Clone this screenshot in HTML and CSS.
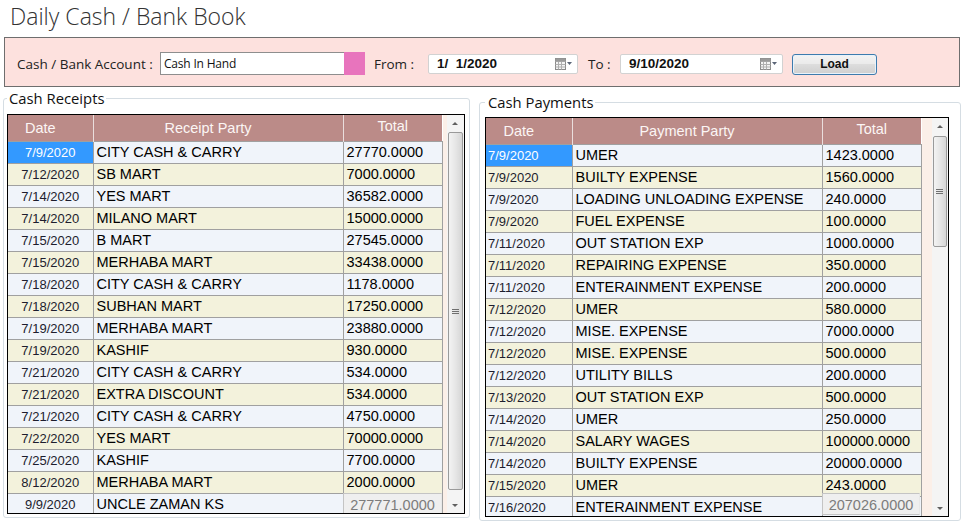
FILE: index.html
```html
<!DOCTYPE html>
<html>
<head>
<meta charset="utf-8">
<link rel="stylesheet" href="styles.css">
</head>
<body>
<div class="title">Daily Cash / Bank Book</div>
<div class="filter">
  <span class="lbl lbl-acc">Cash / Bank Account :</span>
  <span class="acc-input">Cash In Hand</span><span class="acc-pick"></span>
  <span class="lbl lbl-from">From :</span>
  <span class="dp dp-from"><span class="dp-text">1/&nbsp; 1/2020</span>
    <svg class="cal" width="18" height="12" viewBox="0 0 18 12"><rect x="0.5" y="0.5" width="10" height="11" fill="#f4f4f4" stroke="#8a8a8a"/><path d="M0.5 3.5h10M3.5 3.5v8M6.5 3.5v8M0.5 6.5h10M0.5 9h10" stroke="#b0b0b0" fill="none"/><rect x="0.5" y="0.5" width="10" height="3" fill="#9a9a9a"/><path d="M12 4h5l-2.5 3z" fill="#5b6577"/></svg>
  </span>
  <span class="lbl lbl-to">To :</span>
  <span class="dp dp-to"><span class="dp-text">9/10/2020</span>
    <svg class="cal" width="18" height="12" viewBox="0 0 18 12"><rect x="0.5" y="0.5" width="10" height="11" fill="#f4f4f4" stroke="#8a8a8a"/><path d="M0.5 3.5h10M3.5 3.5v8M6.5 3.5v8M0.5 6.5h10M0.5 9h10" stroke="#b0b0b0" fill="none"/><rect x="0.5" y="0.5" width="10" height="3" fill="#9a9a9a"/><path d="M12 4h5l-2.5 3z" fill="#5b6577"/></svg>
  </span>
  <span class="btn">Load</span>
</div>
<div class="groups">
  <fieldset class="group group-left">
    <legend>Cash Receipts</legend>
    <div class="grid grid-left">
      <table class="tbl">
        <colgroup><col class="c-date"><col class="c-party"><col class="c-total"></colgroup>
        <tr class="hdr"><th>Date</th><th>Receipt Party</th><th class="th-total">Total</th></tr>
        <tr class="o"><td class="d sel">7/9/2020</td><td>CITY CASH &amp; CARRY</td><td>27770.0000</td></tr>
        <tr class="e"><td class="d">7/12/2020</td><td>SB MART</td><td>7000.0000</td></tr>
        <tr class="o"><td class="d">7/14/2020</td><td>YES MART</td><td>36582.0000</td></tr>
        <tr class="e"><td class="d">7/14/2020</td><td>MILANO MART</td><td>15000.0000</td></tr>
        <tr class="o"><td class="d">7/15/2020</td><td>B MART</td><td>27545.0000</td></tr>
        <tr class="e"><td class="d">7/15/2020</td><td>MERHABA MART</td><td>33438.0000</td></tr>
        <tr class="o"><td class="d">7/18/2020</td><td>CITY CASH &amp; CARRY</td><td>1178.0000</td></tr>
        <tr class="e"><td class="d">7/18/2020</td><td>SUBHAN MART</td><td>17250.0000</td></tr>
        <tr class="o"><td class="d">7/19/2020</td><td>MERHABA MART</td><td>23880.0000</td></tr>
        <tr class="e"><td class="d">7/19/2020</td><td>KASHIF</td><td>930.0000</td></tr>
        <tr class="o"><td class="d">7/21/2020</td><td>CITY CASH &amp; CARRY</td><td>534.0000</td></tr>
        <tr class="e"><td class="d">7/21/2020</td><td>EXTRA DISCOUNT</td><td>534.0000</td></tr>
        <tr class="o"><td class="d">7/21/2020</td><td>CITY CASH &amp; CARRY</td><td>4750.0000</td></tr>
        <tr class="e"><td class="d">7/22/2020</td><td>YES MART</td><td>70000.0000</td></tr>
        <tr class="o"><td class="d">7/25/2020</td><td>KASHIF</td><td>7700.0000</td></tr>
        <tr class="e"><td class="d">8/12/2020</td><td>MERHABA MART</td><td>2000.0000</td></tr>
        <tr class="o"><td class="d">9/9/2020</td><td>UNCLE ZAMAN KS</td><td></td></tr>
      </table>
      <div class="vzone">
        <div class="strip"></div>
        <div class="vscroll">
          <div class="arrow up"></div>
          <div class="track"><div class="thumb thumb-left"><span class="grip"></span></div></div>
          <div class="arrow down"></div>
        </div>
      </div>
      <div class="sum sum-left">277771.0000</div>
    </div>
  </fieldset>
  <fieldset class="group group-right">
    <legend>Cash Payments</legend>
    <div class="grid grid-right">
      <table class="tbl tbl-right">
        <colgroup><col class="c-date2"><col class="c-party"><col class="c-total"></colgroup>
        <tr class="hdr"><th>Date</th><th>Payment Party</th><th class="th-total">Total</th></tr>
        <tr class="o"><td class="d sel">7/9/2020</td><td>UMER</td><td>1423.0000</td></tr>
        <tr class="e"><td class="d">7/9/2020</td><td>BUILTY EXPENSE</td><td>1560.0000</td></tr>
        <tr class="o"><td class="d">7/9/2020</td><td>LOADING UNLOADING EXPENSE</td><td>240.0000</td></tr>
        <tr class="e"><td class="d">7/9/2020</td><td>FUEL EXPENSE</td><td>100.0000</td></tr>
        <tr class="o"><td class="d">7/11/2020</td><td>OUT STATION EXP</td><td>1000.0000</td></tr>
        <tr class="e"><td class="d">7/11/2020</td><td>REPAIRING EXPENSE</td><td>350.0000</td></tr>
        <tr class="o"><td class="d">7/11/2020</td><td>ENTERAINMENT EXPENSE</td><td>200.0000</td></tr>
        <tr class="e"><td class="d">7/12/2020</td><td>UMER</td><td>580.0000</td></tr>
        <tr class="o"><td class="d">7/12/2020</td><td>MISE. EXPENSE</td><td>7000.0000</td></tr>
        <tr class="e"><td class="d">7/12/2020</td><td>MISE. EXPENSE</td><td>500.0000</td></tr>
        <tr class="o"><td class="d">7/12/2020</td><td>UTILITY BILLS</td><td>200.0000</td></tr>
        <tr class="e"><td class="d">7/13/2020</td><td>OUT STATION EXP</td><td>500.0000</td></tr>
        <tr class="o"><td class="d">7/14/2020</td><td>UMER</td><td>250.0000</td></tr>
        <tr class="e"><td class="d">7/14/2020</td><td>SALARY WAGES</td><td>100000.0000</td></tr>
        <tr class="o"><td class="d">7/14/2020</td><td>BUILTY EXPENSE</td><td>20000.0000</td></tr>
        <tr class="e"><td class="d">7/15/2020</td><td>UMER</td><td>243.0000</td></tr>
        <tr class="o"><td class="d">7/16/2020</td><td>ENTERAINMENT EXPENSE</td><td></td></tr>
      </table>
      <div class="vzone vzone-right">
        <div class="strip"></div>
        <div class="vscroll">
          <div class="arrow up"></div>
          <div class="track"><div class="thumb thumb-right"><span class="grip"></span></div></div>
          <div class="arrow down"></div>
        </div>
      </div>
      <div class="sum sum-right">207026.0000</div>
    </div>
  </fieldset>
</div>
</body>
</html>
```
FILE: styles.css
```css
html, body {
  margin: 0;
  padding: 0;
  background: #ffffff;
}
body {
  width: 965px;
  height: 525px;
  overflow: hidden;
  font-family: "Liberation Sans", Arial, sans-serif;
}
.title {
  font-family: "Open Sans", sans-serif;
  font-weight: 300;
  font-size: 23px;
  line-height: 32px;
  color: #333333;
  padding-left: 10px;
  height: 37px;
}
.filter {
  margin: 0 5px 0 4px;
  box-sizing: content-box;
  border: 1px solid #6e6e6e;
  background: #fde1de;
  display: flex;
  align-items: center;
  padding: 3px 0 0 12px;
  height: 45px;
  font-family: "Open Sans", sans-serif;
  font-size: 13.5px;
  color: #222;
}
.lbl { display: inline-block; white-space: nowrap; }
.lbl-acc { width: 143px; }
.lbl-from { width: 54px; margin-left: 9px; }
.lbl-to { width: 32px; margin-left: 10px; }
.acc-input {
  box-sizing: border-box;
  width: 184px;
  height: 23px;
  background: #fff;
  border: 1px solid #8e8e8e;
  border-right: none;
  font-size: 12px;
  line-height: 21px;
  padding-left: 3px;
  color: #111;
  letter-spacing: -0.2px;
}
.acc-pick {
  width: 21px;
  height: 23px;
  background: #e874bd;
}
.dp {
  box-sizing: border-box;
  height: 20px;
  background: #fff;
  border: 1px solid #d2d2d2;
  border-radius: 2px;
  display: flex;
  align-items: center;
  padding-left: 8px;
  padding-right: 4px;
  font-family: "Liberation Sans", Arial, sans-serif;
  font-weight: bold;
  font-size: 13.5px;
  color: #111;
}
.dp-from { width: 150px; }
.dp-to { width: 163px; }
.dp-text { flex: 1; white-space: pre; }
.cal { display: block; }
.btn {
  box-sizing: border-box;
  width: 85px;
  height: 21px;
  margin-left: 9px;
  margin-top: 2px;
  border: 1px solid #3d7bad;
  border-radius: 3px;
  background: linear-gradient(#f3f3f3 0%, #ebebeb 45%, #dddddd 50%, #cfcfcf 100%);
  font-family: "Liberation Sans", Arial, sans-serif;
  font-weight: bold;
  font-size: 12px;
  color: #111;
  text-align: center;
  line-height: 19px;
  box-shadow: inset 0 0 0 1px #e8f2fb;
}
.groups {
  display: flex;
  align-items: flex-start;
}
.group {
  margin: 0;
  border: 1px solid #d5dde3;
  border-radius: 3px;
  min-width: 0;
  box-sizing: border-box;
}
.group legend {
  font-family: "Open Sans", sans-serif;
  font-size: 14.8px;
  line-height: 16px;
  color: #111;
  padding: 0 2px;
}
.group-left {
  margin: 3px 0 0 3px;
  width: 467px;
  padding: 8px 4px 3px 3px;
}
.group-right {
  margin: 7px 0 0 9px;
  width: 482px;
  padding: 7px 11px 3px 5px;
}
.group-right legend { padding-left: 3px; }
.grid {
  position: relative;
  display: flex;
  border: 1px solid #000;
  height: 400px;
  box-sizing: border-box;
  overflow: hidden;
  background: #fff;
}
.tbl {
  table-layout: fixed;
  border-collapse: collapse;
  width: 434px;
  flex: none;
  align-self: flex-start;
}
.tbl-right { width: 435px; }
.c-date { width: 85px; }
.c-date2 { width: 86px; }
.c-party { width: 250px; }
.c-total { width: 99px; }
.tbl th {
  box-sizing: border-box;
  height: 26px;
  padding: 0 20px 0 0;
  background: #bb8b88;
  color: #fbf6f5;
  font-weight: normal;
  font-size: 14.5px;
  line-height: 16px;
  border-left: 1px solid #eadedd;
  text-align: center;
  vertical-align: middle;
}
.tbl th:first-child { border-left: none; }
.tbl th.th-total {
  padding: 0 0 4px 0;
}
.tbl td {
  height: 21px;
  padding: 0 0 0 3px;
  border: 1px solid #a0a0a0;
  font-size: 14.5px;
  color: #000;
  white-space: nowrap;
  overflow: hidden;
  line-height: 21px;
}
.tbl td:first-child { border-left: none; }
.tbl tr.o td { background: #f0f4fa; }
.tbl tr.e td { background: #f3f2dc; }
.tbl td.d {
  font-size: 13px;
  color: #1d1d2e;
  text-align: center;
  padding: 0;
}
.tbl-right td.d { text-align: left; padding-left: 2px; }
.tbl tr td.sel { background: #3399ff; color: #fff; }
.vzone {
  flex: 1;
  display: flex;
  background: #fff;
}
.strip {
  width: 4px;
  background: #fbefe8;
}
.vzone-right .strip { width: 10px; }
.vscroll {
  flex: 1;
  display: flex;
  flex-direction: column;
  background: #f4f4f4;
}
.arrow {
  height: 17px;
  position: relative;
}
.arrow::after {
  content: "";
  position: absolute;
  left: 50%;
  top: 50%;
  margin-left: -3px;
  border-left: 3px solid transparent;
  border-right: 3px solid transparent;
}
.arrow.up::after { margin-top: -2px; border-bottom: 3px solid #606060; }
.arrow.down::after { margin-top: -1px; border-top: 3px solid #606060; }
.track {
  flex: 1;
  padding: 0 1px;
}
.thumb {
  box-sizing: border-box;
  border: 1px solid #9a9a9a;
  border-radius: 2px;
  background: linear-gradient(to right, #f3f3f3, #e6e6e6 50%, #d6d6d6);
  display: flex;
  align-items: center;
  justify-content: center;
}
.thumb-left { height: 358px; }
.thumb-right { height: 111px; margin-top: 1px; }
.grip {
  width: 7px;
  height: 5px;
  background: repeating-linear-gradient(#6f6f6f 0 1px, transparent 1px 2px);
}
.sum {
  position: absolute;
  box-sizing: border-box;
  height: 22px;
  width: 99px;
  background: #efefef;
  border: 1px solid #c4c4c4;
  border-right-color: #e8e8e8;
  color: #7c7c7c;
  font-size: 14.5px;
  line-height: 22px;
  text-align: center;
}
.sum-left { left: 335px; top: 378px; }
.sum-right { left: 336px; top: 375px; width: 98px; }
```
